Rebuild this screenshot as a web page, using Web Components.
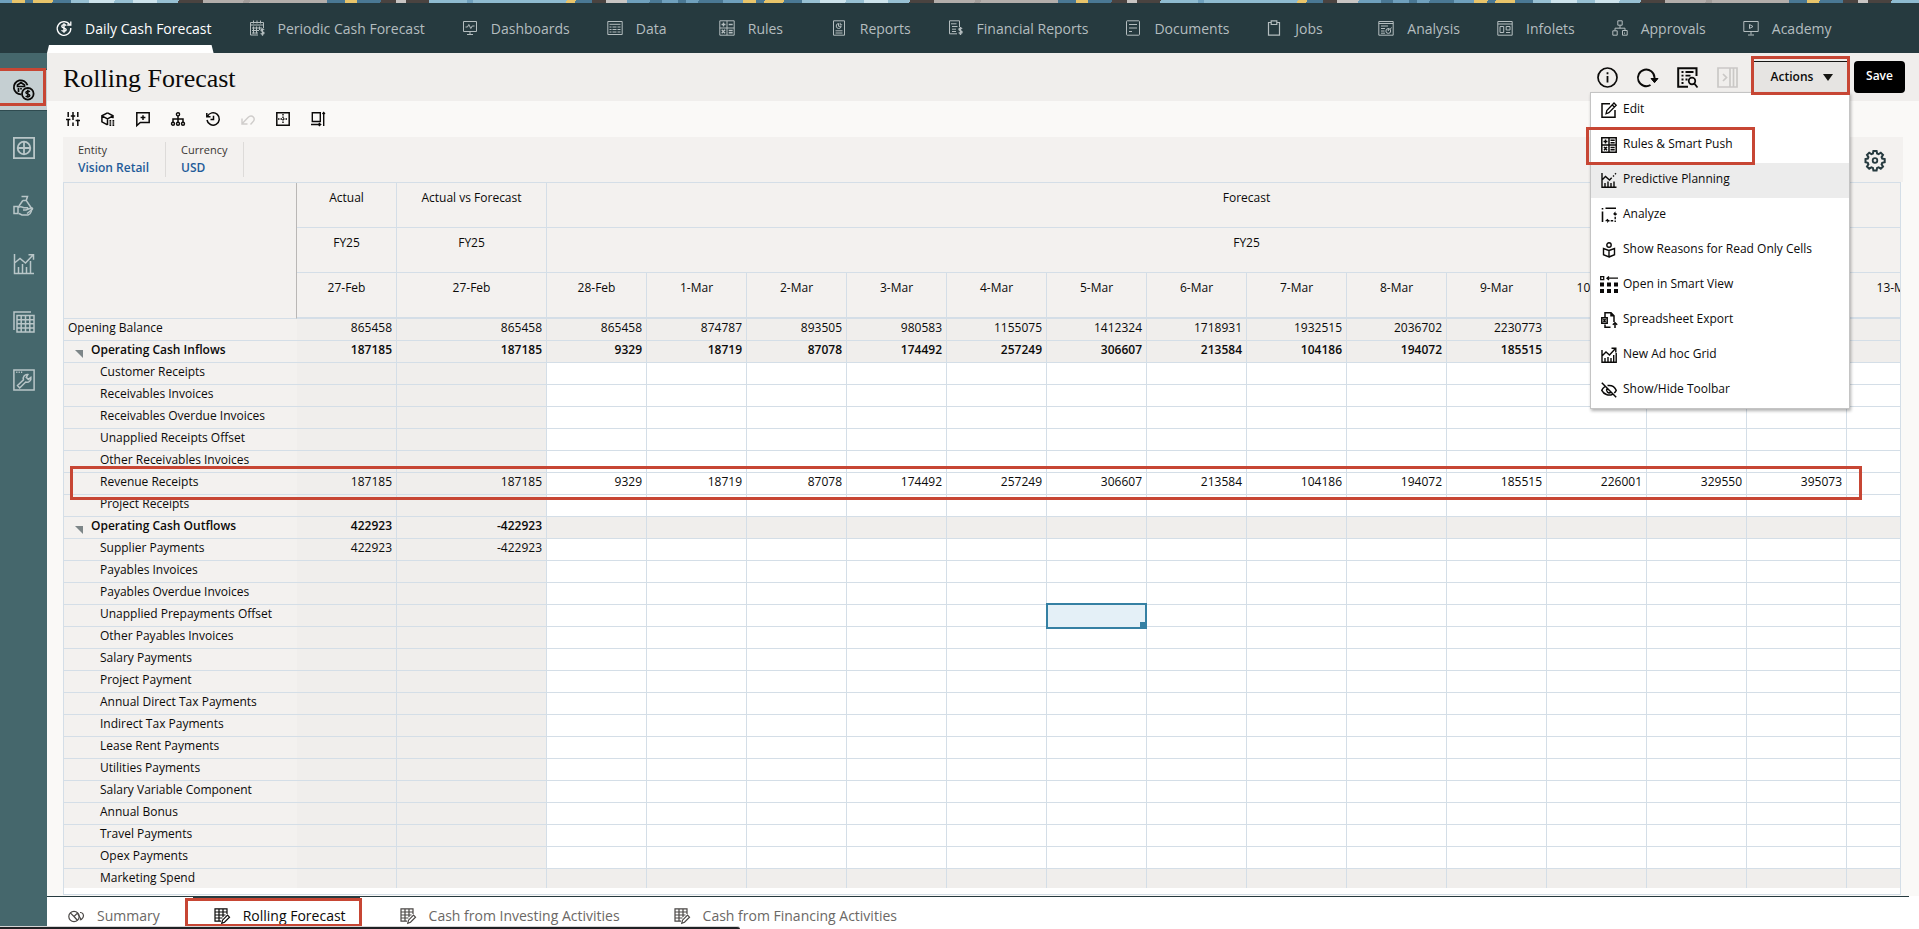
<!DOCTYPE html>
<html lang="en">
<head>
<meta charset="utf-8">
<title>Rolling Forecast</title>
<style>
  html, body { height: 100%; margin: 0; }
  body {
    font-family: "Open Sans", "Noto Sans", sans-serif;
    font-size: 12px;
    color: #0b0a09;
    overflow: hidden;
    --line: #d4dee7;
    --panel: #f3f1ef;
    --readonly: #f0eeec;
    --mark: #c74634;
  }
</style>
</head>
<body>
<cash-app></cash-app>

<script>
const ICONS = {
  cashCycle: '<path d="M13.6 4.6A6.8 6.8 0 1 0 14.8 8" stroke-width="1.3"/><path d="M14.8 1.4v3.600h-3.600" stroke-width="1.3"/><path d="M10.200 5.600C9.4 4.200 5.800 4.200 5.800 6.300S10.200 7.800 10.200 9.800 6.300 11.600 5.600 10.200M8 3.200v9.600" stroke-width="1.400"/>',
  calendarMoney: '<path d="M9 15H1.500V2.500h13V8M1.500 5h13M4.500.5v3M8 .5v3M11.500.5v3"/><path d="M4.500 6.500v7M7.500 6.500v7M10.500 6.500V10M3 8h10M3 10.500h7M3 13h6"/><path d="M15 9.800c-.5-1-3-.9-3 .5s3 1 3 2.600-2.600 1.600-3.200.4M13.500 8.200v7.500" stroke-width="1.300"/>',
  dashboard: '<path d="M1.500 1.500h13v10h-13zM8 11.500v3M5 14.500h6"/><path d="M3.500 7h2l1.300-2.500 2 4L10.200 6h2.300"/>',
  data: '<path d="M.8 1.500h14.400v13H.8zM2.500 4.300h11"/><path d="M2.500 7h2M5.500 7h4M10.500 7h3M2.500 9.500h2M5.500 9.500h4M10.500 9.500h3M2.500 12h2M5.500 12h4M10.500 12h3"/>',
  rules: '<path d="M.8.8h14.400v14.400H.8zM8 .8v14.400M.8 8h14.400"/><path d="M2.500 4.500h4M4.500 2.500v4M9.700 4.500h4M2.700 9.800l3.400 3.400M6.100 9.800l-3.400 3.400M9.700 10.500h4M9.700 12.800h4" stroke-width="1.400"/>',
  report: '<path d="M2.500.8h11v14.400h-11z"/><path d="M7.500 3.500a2.500 2.500 0 1 0 2.700 2.800H7.500zM9.200 2.800v2h2"/><path d="M4.500 10.800h7M4.500 13h7"/>',
  finReport: '<path d="M11.500 7V.8h-10v13H9"/><path d="M3 3.800h5.500M4 6.500h5.500M4 9.200h4M4 11.500h4"/><path d="M14 8.800c-.5-1-3-.9-3 .6s3.100 1.100 3.100 2.700-2.700 1.600-3.300.4M12.500 7v8" stroke-width="1.400"/>',
  doc: '<path d="M1.500 1.500c0-.5.3-.7.7-.7h11.600c.5 0 .7.3.7.7v13c0 .5-.3.7-.7.7H2.200c-.5 0-.7-.3-.7-.7z"/><path d="M4 4.500h8M4 8h8M4 11.500h3"/>',
  clipboard: '<path d="M5 2.500H2.500v12.700h11V2.500H11M5.200 4.500V.8h5.600v3.700z" stroke-width="1.200"/>',
  analysis: '<path d="M.8 1.500h14.400v13.700H.8zM.8 3.500h14.400"/><path d="M3 6h7M3 8.500h4M3 11h3.500M3 13.200h4"/><circle cx="10.300" cy="11" r="2.400"/><path d="M10.300 11V8M12 9.500l1.500-2"/>',
  infolet: '<path d="M.8 1.500h14.400v13.700H.8zM.8 4h14.400"/><path d="M3 6.500h3.700v6H3zM9.200 6.500H13v3.500H9.200zM9 12.500h4.200"/>',
  approvals: '<path d="M5.800.8h4.400v4.400H5.800zM8 5.200v3M3 10.500V8.200h10v2.300"/><path d="M.8 10.800h4.400v4.400H.8zM10.500 10.500h4.700v4.700h-4.700zM12.500 12.500v1.200"/>',
  academy: '<path d="M.8 1.500h14.400v10H.8zM8 11.500v3M5 15h6M6.500 4.500l3.500 2-3.500 2z"/>',
  moneyGlobe: '<path d="M14.500 6.200A7 7 0 1 0 8.300 15.300" stroke-width="1.800"/><path d="M4.500 7.500V6L8 3.600 11.500 6v1.500zM5.500 9v4M8 9v1.500" stroke-width="1.700"/><circle cx="14.800" cy="14.800" r="5.800" stroke-width="1.800"/><path d="M16.700 13c-.6-1.300-3.800-1.200-3.800.5s3.900 1.200 3.900 3-3.300 1.600-4 .3M14.800 10.800v8" stroke-width="1.500"/>',
  target: '<path d="M.9.9h20.200v20.200H.9z" stroke-width="1.800"/><circle cx="11" cy="11" r="6.300" stroke-width="1.800"/><path d="M11 4.500v13M4.500 11h13" stroke-width="1.800"/>',
  handBag: '<path d="M8.500 1.500h6l-1.300 4 4.300 6.200c1.800 2.800 1.200 7-2.500 8.300H9l-3-1.500M9.800 5.500h3.500M9.800 5.500 6 11" stroke-width="1.500"/><path d="M1 11.500h4v7H1zM5 12.500c2.500-1.500 4.500-.3 6 .2h3.500c1 1.300-.5 2.300-1.500 2.300h-3M13 15l5.500-2.200c1.500 0 1.200 1.500.2 2L14 18.500" stroke-width="1.500"/>',
  chart: '<path d="M1.500 1v19.500H21M1.500 10 7 5.500l5.500 4.500L20 2M15.500 1.800h5v5" stroke-width="1.500"/><path d="M5.500 20v-6M9.500 20v-9M13.500 20v-6M17.500 20V8" stroke-width="1.500"/>',
  sheets: '<path d="M1 19V1h17" stroke-width="1.500"/><path d="M4 4.500h17V21H4zM4 8.700h17M4 12.800h17M4 17h17M8.200 4.500V21M12.500 4.500V21M16.800 4.500V21" stroke-width="1.500"/>',
  wrench: '<path d="M.9.9h20.200v20.200H.9z" stroke-width="1.500"/><path d="M3.200 3.300h1.200M5.600 3.300h1.200M8 3.300h1.200" stroke-width="1.500"/><path d="M14.800 5.500a4 4 0 0 0-4.300 5.400l-6 5.600 2.200 2.500 6-6a4 4 0 0 0 5.200-4.600l-2.500 2-2.200-2z" stroke-width="1.500"/>',
  sliders: '<path d="M2.200 0v5M2.200 7.500V14M7 0v8M7 10.500V14M11.800 0v5M11.800 7.500V14M0 7.500h4.400M4.800 4h4.400M9.600 8.500H14" stroke-width="1.500"/>',
  cube: '<path d="M6.500.8l5.500 3v2.500M6.500.8.900 3.800v6l5.600 3M.9 3.800l5.600 3 5.500-3M6.500 6.800V13" stroke-width="1.500"/><path d="M8.500 8.800h1.700M11.500 8.800h1.700M8.500 11h1.700M11.500 11h1.700M8.500 13.200h1.700M11.500 13.200h1.700" stroke-width="1.700"/>',
  comment: '<path d="M.8.8h12.400v9.700H4.300L.8 13.500zM7 3.300V8M4.600 5.600h4.800" stroke-width="1.500"/>',
  tree: '<circle cx="7" cy="2.300" r="1.600" stroke-width="1.400"/><circle cx="2" cy="11.700" r="1.500" stroke-width="1.400"/><circle cx="7" cy="11.700" r="1.500" stroke-width="1.400"/><circle cx="12" cy="11.700" r="1.500" stroke-width="1.400"/><path d="M7 4v6M2 10V7h10v3" stroke-width="1.500"/>',
  history: '<path d="M1.400 4.500A6.200 6.200 0 1 1 1 8M.8 1v3.700h3.700M7.500 3.700v3.800H4.500" stroke-width="1.500"/>',
  undo: '<path d="M1 6.500V12h5.500M1.300 11.500 7 5.500c4-4 8.500 1 4.500 4.800L9.500 12.500" stroke-width="1.400"/>',
  gridPlus: '<path d="M.8.8h12.400v12.400H.8z" stroke-width="1.500"/><path d="M7 2v10M2 7h10" stroke-width="1.400" stroke-dasharray="1.500 1"/>',
  resize: '<path d="M1.300.8h8v8.700h-8zM12.700 0v14M0 12.500h9.500M7.800 11l1.800 1.500L7.800 14M11.500 2 12.700.5 13.900 2" stroke-width="1.400"/>',
  info: '<circle cx="10.500" cy="10.500" r="9.500" stroke-width="1.700"/><path d="M10.500 9v6.500M10.500 5.300v2" stroke-width="1.800"/>',
  refresh: '<path d="M13.500 18A8.300 8.300 0 1 1 17.500 10.500V13" stroke-width="1.900"/><path d="M14 11.500h7l-3.500 4.200z" fill="currentColor"/>',
  listSearch: '<path d="M11 19.800H1.200V1.200h18.300V9" stroke-width="2"/><path d="M4.500 5h2M8.500 5h8M4.500 8.700h2M8.500 8.700h5M4.500 12.500h2M8.500 12.500h2M4.500 16h2" stroke-width="1.800"/><circle cx="15" cy="14" r="3.300" stroke-width="1.700"/><path d="M17.300 16.500l3.200 4" stroke-width="1.800"/>',
  panel: '<path d="M1 1h19v19H1zM13 1v19M16.500 1v19M6 7l3.500 3.500L6 14" stroke-width="1.700"/>',
  gear: '<path d="M8.400 1h3.200l.5 2.500 1.500.6 2.200-1.400 2.200 2.200-1.400 2.200.6 1.500 2.500.5v3.200l-2.500.5-.6 1.500 1.400 2.200-2.200 2.200-2.200-1.400-1.500.6-.5 2.500H8.400l-.5-2.500-1.500-.6-2.200 1.400L2 16.500l1.400-2.200-.6-1.500L.5 12.300V9.100l2.300-.5.6-1.500L2 4.900l2.200-2.200 2.200 1.400 1.500-.6z" stroke-width="2"/><circle cx="10" cy="10.500" r="2.300" stroke-width="1.800"/>',
  edit: '<path d="M9 1.800H1v13.400h13V8" stroke-width="1.500"/><path d="M5 11.800l.8-3.300L13 1l2.200 2.200-7.300 7.500zM11.300 3l2 2" stroke-width="1.300"/>',
  calc: '<path d="M.8.8h14.400v14.400H.8zM8 .8v14.400M.8 8h14.400M2.500 4.500h4M4.500 2.500v4M9.500 3.300h4.200M9.500 5.700h4.200M3 10l3 3.300M6 10l-3 3.300M9.500 10.400h4.200M9.500 12.800h4.200" stroke-width="1.500"/>',
  predict: '<path d="M1 1v14.200h14.500M1 8l3.500-3.500L8.500 8l2.200-2.200M12 4.500l1-1M14 2.300l1-1M4 14.500V11M7 14.500V9.500M10 14.500V11M13 14.500V9.500" stroke-width="1.400"/>',
  analyze: '<path d="M1.500 1v1.500M1.500 4.500V15M4.500 1.200H15" stroke-width="1.600"/><path d="M14.200 6v9M12.700 7.500l1.500-1.800 1.500 1.800M6 13.800h7M7 12.300l-1.700 1.500L7 15.300" stroke-width="1.400" stroke-dasharray="2.500 1.200"/>',
  reader: '<circle cx="8" cy="3" r="2.200" stroke-width="1.400"/><path d="M8 15V8.500L2.500 6.500v6.200zM8 15l5.500-2.300V6.500L8 8.500" stroke-width="1.400"/>',
  smartView: '<g fill="currentColor" stroke="none"><path d="M0 6.500h4v4H0zM7 6.500h4v4H7zM14 6.500h4v4h-4zM0 13h4v4H0zM7 13h4v4H7zM14 13h4v4h-4z"/></g><path d="M.7.7h3v3h-3zM7 2.200h11M9 .5 7 2.200l2 1.700" stroke-width="1.300"/>',
  export: '<path d="M4 5V.8h6l3 3V10M4 12.500v2.700h5.500M10 .8v3h3" stroke-width="1.500"/><path d="M.8 5.800h5.400v5.400H.8zM2.300 7.200l2.400 2.600M4.700 7.200 2.300 9.800" stroke-width="1.500"/><path d="M14 16v-5M11.800 12.800 14 10.800l2.200 2" stroke-width="1.500"/>',
  adhoc: '<path d="M1 3v12.200h14.200V6M1 9l4-4 3.500 3L14 2M10.500 1.200h4.300v4.300M4 15v-4M7 15v-5M10 15v-4M12.700 15V8" stroke-width="1.400"/>',
  eyeOff: '<path d="M.8.8l14.400 14.400M4 4.500C2.500 5.500 1.200 7 .8 8.300c2 4 6.800 6 10.700 4M6.500 3.600c4-.6 7.300 1.400 8.700 4.700-.5 1-1.200 2-2 2.700M6 6.500a2.800 2.800 0 0 0 3.800 3.900" stroke-width="1.500"/>',
  summary: '<circle cx="6" cy="8.500" r="5.200" stroke-width="1.200"/><path d="M6 8.500 2.300 4.800M6 8.500l3.700-3.700M6 8.500l3.500 4" stroke-width="1.200"/><path d="M9.500 5.500l4 6.500M12 4.500c2.800-.2 4.300 2.500 3 5-.8 1.600-1.800 2.400-3.200 2.400" stroke-width="1.200"/>',
  sheetEdit: '<path d="M7 13.200H1V.8h12V6M1 4h12M1 7h10.500M1 10h7.500M5 .8v12.400M9 .8V9" stroke-width="1.200"/><path d="M7.800 15.200l.7-3 5-5 2 2-5 5z" stroke-width="1.200"/>'
};

// Inline icon, drawn in the current text colour
class AppIcon extends HTMLElement {
  connectedCallback() {
    if (this.shadowRoot) return;
    const size = this.getAttribute("size") || "16";
    this.attachShadow({ mode: "open" });
    this.shadowRoot.innerHTML = `
      <style>
        :host { display: inline-flex; flex: none; width: ${size}px; height: ${size}px; }
        svg { width: 100%; height: 100%; overflow: visible; }
      </style>
      <svg viewBox="0 0 ${size} ${size}" fill="none" stroke="currentColor" aria-hidden="true">${ICONS[this.getAttribute("name")]}</svg>
    `;
  }
}
customElements.define("app-icon", AppIcon);

// Red callout frame laid over its positioned parent
class MarkBox extends HTMLElement {
  constructor() {
    super();
    this.attachShadow({ mode: "open" });
    this.shadowRoot.innerHTML = `
      <style>
        :host {
          display: block;
          position: absolute;
          box-sizing: border-box;
          border: 3px solid var(--mark);
          pointer-events: none;
          z-index: 5;
        }
      </style>
    `;
  }
}
customElements.define("mark-box", MarkBox);

class TopNav extends HTMLElement {
  constructor() {
    super();
    const items = [
      ["cashCycle", "Daily Cash Forecast"], ["calendarMoney", "Periodic Cash Forecast"],
      ["dashboard", "Dashboards"], ["data", "Data"], ["rules", "Rules"],
      ["report", "Reports"], ["finReport", "Financial Reports"], ["doc", "Documents"],
      ["clipboard", "Jobs"], ["analysis", "Analysis"], ["infolet", "Infolets"],
      ["approvals", "Approvals"], ["academy", "Academy"]
    ];
    this.attachShadow({ mode: "open" });
    this.shadowRoot.innerHTML = `
      <style>
        :host { display: block; background: #263a3f; }
        .mosaic {
          height: 3px;
          background: repeating-linear-gradient(100deg,
            #6fa0bd 0 12px, #e8c46a 12px 25px, #4a7894 25px 33px, #e8c46a 33px 52px,
            #4a7894 52px 70px, #97c0d3 70px 88px, #cde3ec 88px 113px, #97c0d3 113px 131px,
            #cde3ec 131px 155px, #97c0d3 155px 176px, #4a4340 176px 200px, #b3aeab 200px 240px,
            #a19c99 240px 246px, #b3aeab 246px 322px, #4a7894 322px 340px, #e8c46a 340px 352px,
            #4a7894 352px 375px, #4a4340 375px 390px, #c8c5c3 390px 400px, #4a4340 400px 423px,
            #8fbbd0 423px 460px, #6fa0bd 460px 466px, #8fbbd0 466px 558px, #e8c46a 558px 567px,
            #4a7894 567px 583px, #4a4340 583px 597px, #c8c5c3 597px 618px, #6fa0bd 618px 640px,
            #4a7894 640px 652px, #6fa0bd 652px 668px, #4a7894 668px 676px, #6fa0bd 676px 688px,
            #4a7894 688px 712px, #6fa0bd 712px 720px);
        }
        nav { display: flex; gap: 26px; height: 50px; padding-left: 47px; }
        a {
          position: relative;
          display: flex;
          align-items: center;
          gap: 13px;
          padding: 0 2px 0 9px;
          font-size: 14px;
          color: #b4bdbf;
          text-decoration: none;
          white-space: nowrap;
        }
        span { min-width: 46px; }
        a[aria-current] { color: #fff; }
        a[aria-current]::after {
          content: "";
          position: absolute;
          inset: auto 0 0 0;
          height: 8px;
          background: #fff;
          clip-path: polygon(2px 0, calc(100% - 2px) 0, 100% 100%, 0 100%);
        }
      </style>
      <div class="mosaic"></div>
      <nav aria-label="Clusters">
        ${items.map(([icon, text], i) => `<a href="#"${i ? "" : ' aria-current="page"'}><app-icon name="${icon}"></app-icon><span>${text}</span></a>`).join("")}
      </nav>
    `;
  }
}
customElements.define("top-nav", TopNav);

class SideRail extends HTMLElement {
  constructor() {
    super();
    const items = [
      ["moneyGlobe", "Cash"], ["target", "Overview"], ["handBag", "Funding"],
      ["chart", "Trends"], ["sheets", "Grids"], ["wrench", "Settings"]
    ];
    this.attachShadow({ mode: "open" });
    this.shadowRoot.innerHTML = `
      <style>
        :host { display: block; width: 47px; background: #45676c; }
        nav { display: flex; flex-direction: column; gap: 16px; padding-top: 16px; }
        button {
          position: relative;
          display: flex;
          align-items: center;
          justify-content: center;
          width: 100%;
          height: 42px;
          padding: 0;
          border: 0;
          background: none;
          color: #b9c6c8;
        }
        button[aria-pressed="true"] {
          background: #c5cfd2;
          color: #0b0a09;
          border-block: 1px solid #2f4b50;
        }
        mark-box { inset: -2px 1px 4px 0; border-left: 0; }
      </style>
      <nav aria-label="Sections">
        ${items.map(([icon, label], i) => `<button aria-label="${label}" aria-pressed="${!i}"><app-icon name="${icon}" size="22"></app-icon>${i ? "" : "<mark-box></mark-box>"}</button>`).join("")}
      </nav>
    `;
  }
}
customElements.define("side-rail", SideRail);

class ActionsMenu extends HTMLElement {
  constructor() {
    super();
    const items = [
      ["edit", "Edit"], ["calc", "Rules &amp; Smart Push"], ["predict", "Predictive Planning"],
      ["analyze", "Analyze"], ["reader", "Show Reasons for Read Only Cells"],
      ["smartView", "Open in Smart View", 18], ["export", "Spreadsheet Export"],
      ["adhoc", "New Ad hoc Grid"], ["eyeOff", "Show/Hide Toolbar"]
    ];
    this.attachShadow({ mode: "open" });
    this.shadowRoot.innerHTML = `
      <style>
        :host {
          display: block;
          position: absolute;
          top: calc(100% - 1px);
          right: 0;
          width: 260px;
          box-sizing: border-box;
          background: #fff;
          border: 1px solid #c4c4c4;
          box-shadow: 1px 2px 3px rgba(0, 0, 0, .3);
          z-index: 3;
        }
        ul { list-style: none; margin: 0; padding: 0; }
        li { position: relative; }
        button {
          display: flex;
          align-items: center;
          width: 100%;
          height: 35px;
          padding: 0 0 4px 8px;
          border: 0;
          background: none;
          font: inherit;
          color: inherit;
          white-space: nowrap;
        }
        .icon { display: flex; justify-content: center; width: 20px; margin-right: 4px; padding-top: 3px; }
        .hover { background: #ececec; }
        mark-box { inset: -1px 94px -2px -5px; }
      </style>
      <ul>
        ${items.map(([icon, text, size = 16], i) => `<li><button${i === 2 ? ' class="hover"' : ""}><span class="icon"><app-icon name="${icon}" size="${size}"></app-icon></span>${text}</button>${i === 1 ? "<mark-box></mark-box>" : ""}</li>`).join("")}
      </ul>
    `;
  }
}
customElements.define("actions-menu", ActionsMenu);

class FormHeader extends HTMLElement {
  constructor() {
    super();
    this.attachShadow({ mode: "open" });
    this.shadowRoot.innerHTML = `
      <style>
        :host {
          display: flex;
          align-items: center;
          justify-content: space-between;
          height: 48px;
          padding: 0 14px 0 16px;
          background: var(--readonly);
        }
        h1 {
          margin: 0;
          padding-top: 3px;
          font-family: Georgia, "Liberation Serif", serif;
          font-size: 26px;
          font-weight: 400;
        }
        .tools { display: flex; align-items: center; gap: 19px; }
        button { padding: 0; border: 0; background: none; font: inherit; color: inherit; }
        .icon { display: flex; }
        .icon:disabled { color: #cac8c6; }
        .main { display: flex; gap: 4px; margin-left: -6px; }
        .main button { height: 32px; font-weight: 600; }
        .wrap { position: relative; }
        .actions {
          display: flex;
          align-items: center;
          justify-content: center;
          gap: 10px;
          width: 99px;
          padding: 0 0 3px 4px;
          background: #e6e4e2;
          border: 1px solid #161513;
          border-width: 1px 1px 0 0;
          border-radius: 0 3px 0 0;
        }
        .save { width: 51px; padding-bottom: 3px; background: #000; color: #fff; border-radius: 4px; }
        .arrow { border: 5px solid transparent; border-width: 7px 5px 0; border-top-color: #161513; margin-top: 3px; }
        mark-box { inset: -5px 0 -2px 0; }
      </style>
      <h1>Rolling Forecast</h1>
      <div class="tools">
        <button class="icon" aria-label="Information"><app-icon name="info" size="21"></app-icon></button>
        <button class="icon" aria-label="Refresh"><app-icon name="refresh" size="21"></app-icon></button>
        <button class="icon" aria-label="Details"><app-icon name="listSearch" size="21"></app-icon></button>
        <button class="icon" aria-label="Expand panel" disabled><app-icon name="panel" size="21"></app-icon></button>
        <div class="main">
          <div class="wrap">
            <button class="actions" aria-haspopup="menu" aria-expanded="true">Actions <span class="arrow"></span></button>
            <actions-menu></actions-menu>
            <mark-box></mark-box>
          </div>
          <button class="save">Save</button>
        </div>
      </div>
    `;
  }
}
customElements.define("form-header", FormHeader);

class FormToolbar extends HTMLElement {
  constructor() {
    super();
    const items = [
      ["sliders", "Adjust"], ["cube", "Supporting detail"], ["comment", "Comments"],
      ["tree", "Hierarchy"], ["history", "History"], ["undo", "Undo"],
      ["gridPlus", "Grid spread"], ["resize", "Lock and resize"]
    ];
    this.attachShadow({ mode: "open" });
    this.shadowRoot.innerHTML = `
      <style>
        :host { display: flex; align-items: center; gap: 21px; height: 36px; padding-left: 19px; }
        button { display: flex; padding: 0; border: 0; background: none; color: inherit; }
        button:disabled { color: #cfcdcb; }
      </style>
      ${items.map(([icon, label]) => `<button aria-label="${label}"${icon === "undo" ? " disabled" : ""}><app-icon name="${icon}" size="14"></app-icon></button>`).join("")}
    `;
  }
}
customElements.define("form-toolbar", FormToolbar);

class PovBar extends HTMLElement {
  constructor() {
    super();
    this.attachShadow({ mode: "open" });
    this.shadowRoot.innerHTML = `
      <style>
        :host {
          display: flex;
          align-items: center;
          height: 45px;
          margin: 0 16px;
          background: var(--panel);
        }
        dl { display: flex; flex: 1; margin: 0; }
        dl div { padding: 0 16px 2px 15px; border-right: 1px solid #dddbd9; line-height: 15px; }
        dt { font-size: 11px; color: #3a3632; }
        dd { margin: 3px 0 0; font-weight: 600; }
        a { color: #1f5c99; text-decoration: none; }
        button { display: flex; margin-right: 18px; padding: 0; border: 0; background: none; color: #263a3f; }
      </style>
      <dl>
        <div><dt>Entity</dt><dd><a href="#">Vision Retail</a></dd></div>
        <div><dt>Currency</dt><dd><a href="#">USD</a></dd></div>
      </dl>
      <button aria-label="Settings"><app-icon name="gear" size="20"></app-icon></button>
    `;
  }
}
customElements.define("pov-bar", PovBar);

class ForecastGrid extends HTMLElement {
  constructor() {
    super();
    this.days = ["28-Feb"];
    for (let d = 1; d <= 13; d++) this.days.push(`${d}-Mar`);
    const inflow = [9329, 18719, 87078, 174492, 257249, 306607, 213584, 104186, 194072, 185515];
    this.rows = [
      { name: "Opening Balance", level: 0, locked: true, values: [865458, 865458, 865458, 874787, 893505, 980583, 1155075, 1412324, 1718931, 1932515, 2036702, 2230773] },
      { name: "Operating Cash Inflows", level: 1, locked: true, values: [187185, 187185, ...inflow] },
      { name: "Customer Receipts" },
      { name: "Receivables Invoices" },
      { name: "Receivables Overdue Invoices" },
      { name: "Unapplied Receipts Offset" },
      { name: "Other Receivables Invoices" },
      { name: "Revenue Receipts", values: [187185, 187185, ...inflow, 226001, 329550, 395073] },
      { name: "Project Receipts" },
      { name: "Operating Cash Outflows", level: 1, locked: true, values: [422923, -422923] },
      { name: "Supplier Payments", values: [422923, -422923] },
      { name: "Payables Invoices" },
      { name: "Payables Overdue Invoices" },
      { name: "Unapplied Prepayments Offset", selected: 7 },
      { name: "Other Payables Invoices" },
      { name: "Salary Payments" },
      { name: "Project Payment" },
      { name: "Annual Direct Tax Payments" },
      { name: "Indirect Tax Payments" },
      { name: "Lease Rent Payments" },
      { name: "Utilities Payments" },
      { name: "Salary Variable Component" },
      { name: "Annual Bonus" },
      { name: "Travel Payments" },
      { name: "Opex Payments" },
      { name: "Marketing Spend", locked: true }
    ];
    this.attachShadow({ mode: "open" });
    this.shadowRoot.innerHTML = `
      <style>
        :host {
          display: flex;
          flex: 1;
          min-height: 0;
          position: relative;
          margin: 0 18px 1px 16px;
          padding-bottom: 6px;
          background: #fff;
          border: 1px solid var(--line);
        }
        .scroller { flex: 1; overflow: hidden; }
        table { width: 1883px; table-layout: fixed; border-collapse: separate; border-spacing: 0; line-height: 17px; }
        .c-name { width: 233px; }
        .c-vs { width: 150px; }
        th, td {
          box-sizing: border-box;
          padding: 0;
          border: 0 solid var(--line);
          border-width: 0 1px 1px 0;
          vertical-align: top;
          font-weight: 400;
          white-space: nowrap;
        }
        thead th { height: 45px; padding-top: 6px; background: var(--panel); }
        thead tr:last-child th { height: 46px; border-bottom-width: 2px; }
        thead .corner { border-right-color: #b9b7b5; border-bottom-width: 1px; }
        tbody th { height: 22px; padding-left: 36px; text-align: left; background: var(--panel); border-right: 0; }
        tbody td { position: relative; padding-right: 4px; text-align: right; }
        tbody td.actual, tr.locked td { background: var(--readonly); }
        .level0 th { padding-left: 4px; }
        .level1 th, .level1 td { font-weight: 600; }
        .level1 th { padding-left: 11px; }
        .level1 th::before {
          content: "";
          display: inline-block;
          margin-right: 8px;
          vertical-align: -4px;
          border: 4px solid #7d8688;
          border-bottom-color: transparent;
          border-left-color: transparent;
        }
        .cursor {
          position: absolute;
          inset: -2px -1px -3px -1px;
          background: #e4f0f7;
          border: 2px solid #3580a3;
          z-index: 1;
        }
        .cursor::after {
          content: "";
          position: absolute;
          right: 0;
          bottom: 0;
          width: 5px;
          height: 5px;
          background: #3580a3;
        }
        mark-box { inset: 283px 38px auto 6px; height: 34px; }
      </style>
      <div class="scroller">
        <table>
          <colgroup><col class="c-name"><col><col class="c-vs">${this.days.map(() => "<col>").join("")}</colgroup>
          <thead>
            <tr><th class="corner" rowspan="3"></th><th>Actual</th><th>Actual vs Forecast</th><th colspan="14">Forecast</th></tr>
            <tr><th>FY25</th><th>FY25</th><th colspan="14">FY25</th></tr>
            <tr><th>27-Feb</th><th>27-Feb</th>${this.days.map((d) => `<th>${d}</th>`).join("")}</tr>
          </thead>
          <tbody>${this.rows.map((row) => this.renderRow(row)).join("")}</tbody>
        </table>
      </div>
      <mark-box></mark-box>
    `;
  }

  renderRow({ name, level = 2, locked, values = [], selected }) {
    let cells = "";
    for (let i = 0; i < this.days.length + 2; i++) {
      const content = i === selected ? '<div class="cursor"></div>' : values[i] ?? "";
      cells += `<td${i < 2 ? ' class="actual"' : ""}>${content}</td>`;
    }
    return `<tr class="level${level}${locked ? " locked" : ""}"><th scope="row">${name}</th>${cells}</tr>`;
  }
}
customElements.define("forecast-grid", ForecastGrid);

class SheetTabs extends HTMLElement {
  constructor() {
    super();
    const items = [
      ["summary", "Summary"], ["sheetEdit", "Rolling Forecast"],
      ["sheetEdit", "Cash from Investing Activities"], ["sheetEdit", "Cash from Financing Activities"]
    ];
    this.attachShadow({ mode: "open" });
    this.shadowRoot.innerHTML = `
      <style>
        :host { display: block; background: #fff; }
        nav {
          display: flex;
          gap: 19px;
          height: 32px;
          margin-right: 10px;
          border-top: 1px solid #263a3f;
        }
        a {
          position: relative;
          display: flex;
          align-items: center;
          gap: 13px;
          padding: 5px 14px 0 21px;
          font-size: 14px;
          color: #6b6865;
          text-decoration: none;
          white-space: nowrap;
        }
        app-icon { color: #4a4745; }
        a[aria-current], a[aria-current] app-icon { color: #0b0a09; }
        a[aria-current] { box-shadow: inset 0 2px #263a3f; }
        mark-box { inset: 1px -2px 2px -8px; }
      </style>
      <nav aria-label="Forms">
        ${items.map(([icon, text], i) => `<a href="#"${i === 1 ? ' aria-current="page"' : ""}><app-icon name="${icon}"></app-icon>${text}${i === 1 ? "<mark-box></mark-box>" : ""}</a>`).join("")}
      </nav>
    `;
  }
}
customElements.define("sheet-tabs", SheetTabs);

class CashApp extends HTMLElement {
  constructor() {
    super();
    this.attachShadow({ mode: "open" });
    this.shadowRoot.innerHTML = `
      <style>
        :host {
          display: grid;
          grid-template: auto minmax(0, 1fr) / auto minmax(0, 1fr);
          height: 100vh;
          position: relative;
        }
        top-nav { grid-column: 1 / -1; }
        main { display: flex; flex-direction: column; min-height: 0; background: #faf9f7; }
        .status {
          position: absolute;
          left: 0;
          bottom: 0;
          width: 740px;
          height: 3px;
          background: #202124;
          border-top: 1px solid #d5d5d5;
          border-top-right-radius: 3px;
          box-sizing: border-box;
          z-index: 6;
        }
      </style>
      <top-nav></top-nav>
      <side-rail></side-rail>
      <main>
        <form-header></form-header>
        <form-toolbar></form-toolbar>
        <pov-bar></pov-bar>
        <forecast-grid></forecast-grid>
        <sheet-tabs></sheet-tabs>
      </main>
      <div class="status"></div>
    `;
  }
}
customElements.define("cash-app", CashApp);
</script>
</body>
</html>
